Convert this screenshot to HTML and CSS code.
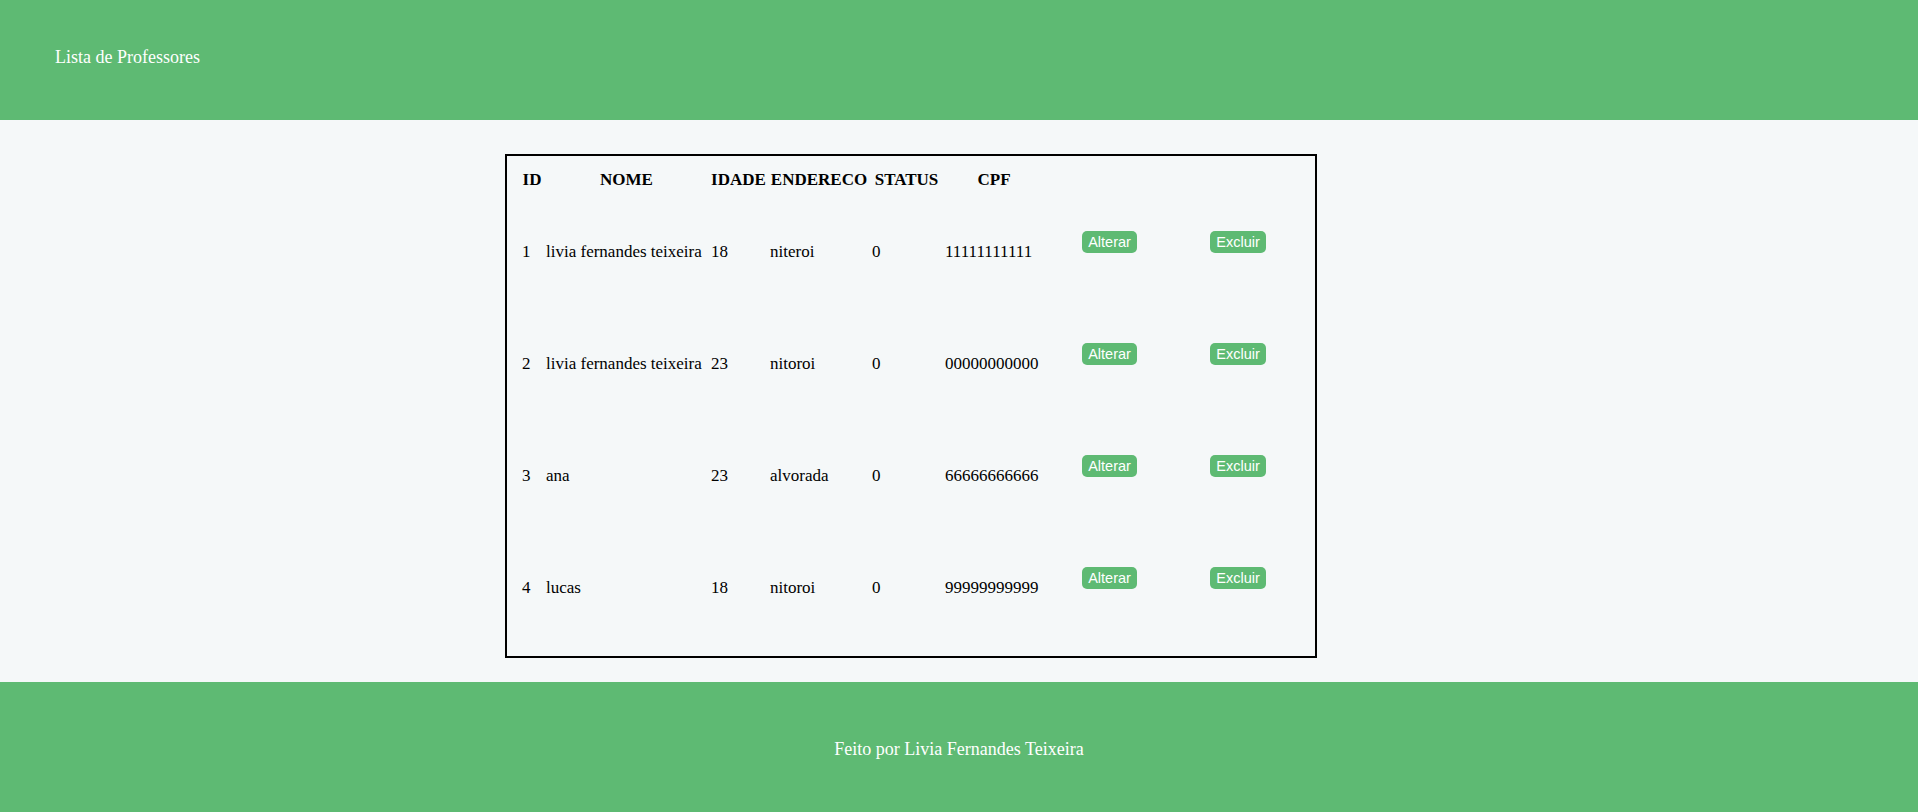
FILE: index.html
```html
<!DOCTYPE html>
<html lang="pt-BR">
<head>
<meta charset="utf-8">
<title>Lista de Professores</title>
<link rel="stylesheet" href="styles.css">
</head>
<body>
<header class="topo">Lista de Professores</header>
<main class="conteudo">
  <div class="quadro">
    <table class="tabela">
      <colgroup>
        <col class="c-id"><col class="c-nome"><col class="c-idade"><col class="c-end"><col class="c-status"><col class="c-cpf"><col class="c-alt"><col>
      </colgroup>
      <thead>
        <tr><th>ID</th><th>NOME</th><th>IDADE</th><th>ENDERECO</th><th>STATUS</th><th>CPF</th></tr>
      </thead>
      <tbody>
        <tr>
          <td>1</td><td>livia fernandes teixeira</td><td>18</td><td>niteroi</td><td>0</td><td>11111111111</td>
          <td class="acao"><div class="acao-box"><button class="btn">Alterar</button></div></td>
          <td class="acao"><div class="acao-box"><button class="btn">Excluir</button></div></td>
        </tr>
        <tr>
          <td>2</td><td>livia fernandes teixeira</td><td>23</td><td>nitoroi</td><td>0</td><td>00000000000</td>
          <td class="acao"><div class="acao-box"><button class="btn">Alterar</button></div></td>
          <td class="acao"><div class="acao-box"><button class="btn">Excluir</button></div></td>
        </tr>
        <tr>
          <td>3</td><td>ana</td><td>23</td><td>alvorada</td><td>0</td><td>66666666666</td>
          <td class="acao"><div class="acao-box"><button class="btn">Alterar</button></div></td>
          <td class="acao"><div class="acao-box"><button class="btn">Excluir</button></div></td>
        </tr>
        <tr>
          <td>4</td><td>lucas</td><td>18</td><td>nitoroi</td><td>0</td><td>99999999999</td>
          <td class="acao"><div class="acao-box"><button class="btn">Alterar</button></div></td>
          <td class="acao"><div class="acao-box"><button class="btn">Excluir</button></div></td>
        </tr>
      </tbody>
    </table>
  </div>
</main>
<footer class="rodape">Feito por Livia Fernandes Teixeira</footer>
</body>
</html>
```

FILE: styles.css
```css
* { box-sizing: border-box; }

body {
  margin: 0;
  background: #f5f8f9;
  font-family: "Liberation Serif", "Times New Roman", serif;
  color: #000;
}

.topo {
  height: 120px;
  padding: 47px 55px 0;
  background: #5eba73;
  color: #fff;
  font-size: 18px;
}

.conteudo {
  padding: 34px 0 24px 505px;
}

.quadro {
  width: 812px;
  border: 2px solid #000;
  padding: 9px 12px 11px;
}

.tabela {
  width: 100%;
  table-layout: fixed;
  border-spacing: 2px;
  font-size: 17px;
}

.c-id { width: 22px; }
.c-nome { width: 163px; }
.c-idade { width: 57px; }
.c-end { width: 100px; }
.c-status { width: 71px; }
.c-cpf { width: 100px; }
.c-alt { width: 127px; }

.tabela th {
  padding: 3px 1px 5px;
  font-weight: bold;
  text-align: center;
  white-space: nowrap;
}

.tabela tbody tr { height: 110px; }

.tabela td {
  padding: 0 1px;
  vertical-align: middle;
  text-align: left;
  white-space: nowrap;
}

.tabela td.acao { text-align: center; }

.acao-box {
  display: flex;
  justify-content: center;
  margin-bottom: 20px;
}

.btn {
  height: 22px;
  padding: 0 6px;
  border: 0;
  border-radius: 5px;
  background: #5eba73;
  color: #fff;
  font-family: "Liberation Sans", Arial, sans-serif;
  font-size: 14.5px;
  line-height: 22px;
}

.rodape {
  padding: 57px 0 54px;
  background: #5eba73;
  color: #fff;
  font-size: 18px;
  text-align: center;
}
```
